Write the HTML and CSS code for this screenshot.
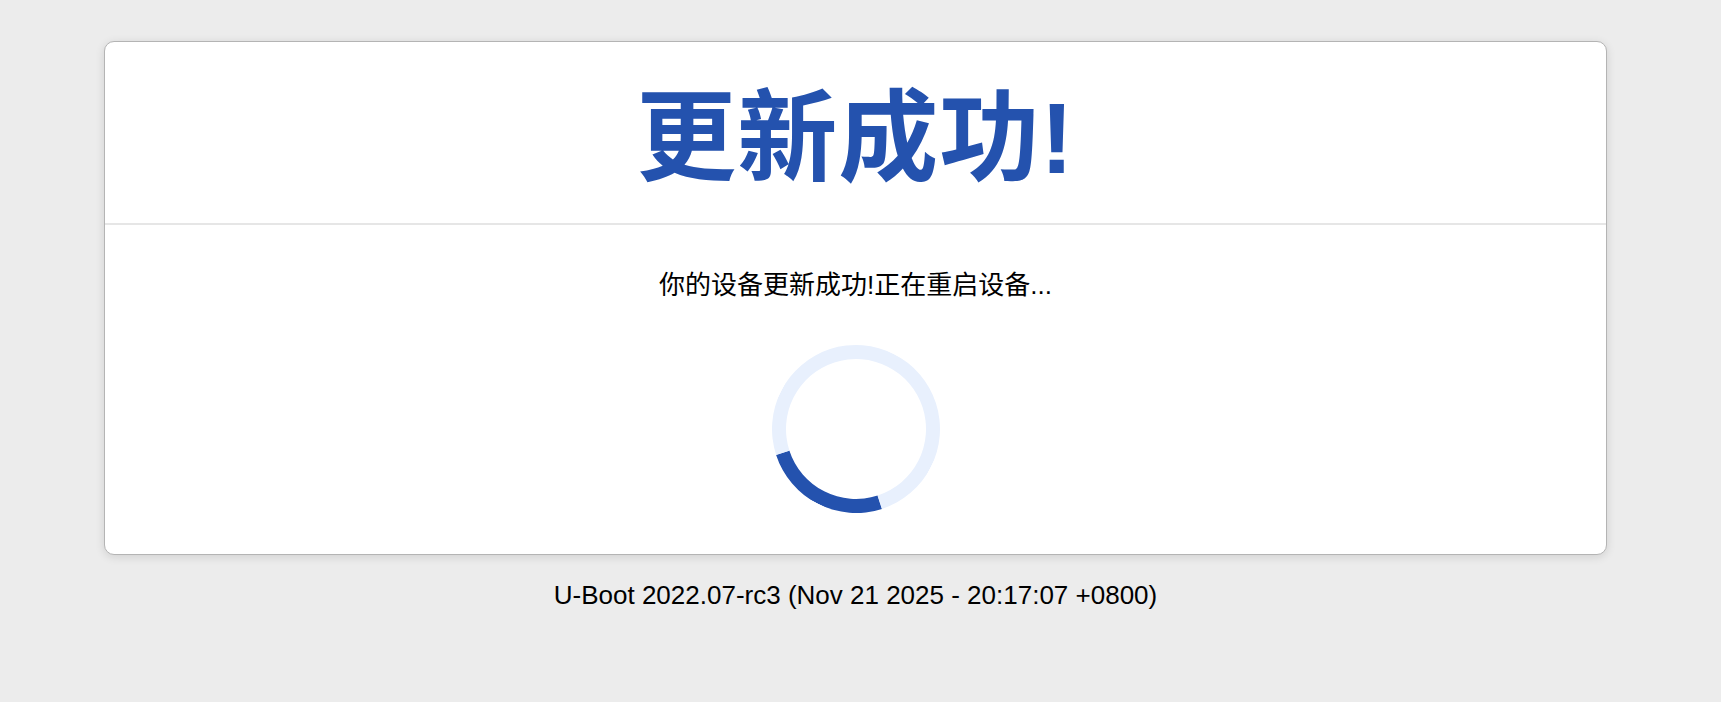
FILE: index.html
```html
<!DOCTYPE html>
<html lang="zh-CN">
<head>
    <meta charset="UTF-8">
    <meta name="viewport" content="width=device-width, initial-scale=1.0">
    <title>更新成功</title>
    <link rel="stylesheet" href="styles.css">
</head>
<body>
    <div class="page">
        <!-- 结果卡片 -->
        <div class="card">
            <div class="card-header">
                <h1>更新成功!</h1>
            </div>
            <div class="card-body">
                <p class="message">你的设备更新成功!正在重启设备...</p>
                <div class="spinner"></div>
            </div>
        </div>

        <div class="footer">U-Boot 2022.07-rc3 (Nov 21 2025 - 20:17:07 +0800)</div>
    </div>
</body>
</html>
```

FILE: styles.css
```css
html, body {
    margin: 0;
    padding: 0;
}
body {
    font-family: "Liberation Sans", Arial, "Noto Sans CJK SC", sans-serif;
    background-color: #ececec;
    color: #000;
}
.page {
    width: 1503px;
    margin-left: 104px;
    padding-top: 41px;
}
.card {
    background: #fff;
    border: 1px solid #b4b4b4;
    border-radius: 10px;
    box-shadow: 0 2px 10px rgba(0, 0, 0, 0.12);
}
.card-header {
    padding: 36px 0 25px;
    border-bottom: 2px solid #e6e6e6;
    text-align: center;
}
h1 {
    margin: 0;
    font-size: 100px;
    line-height: 120px;
    font-weight: bold;
    letter-spacing: 1px;
    color: #2452ae;
}
.card-body {
    padding: 42px 0 41px;
    display: flex;
    flex-direction: column;
    align-items: center;
}
.message {
    margin: 0 0 42px;
    font-size: 26px;
    line-height: 36px;
}
.spinner {
    width: 140px;
    height: 140px;
    border: 14px solid #e8f0fd;
    border-top-color: #2452ae; /* 转动的那一段 */
    border-radius: 50%;
    transform: rotate(207deg);
}
.footer {
    margin-top: 25px;
    text-align: center;
    font-size: 26px;
    line-height: 30px;
}
```
